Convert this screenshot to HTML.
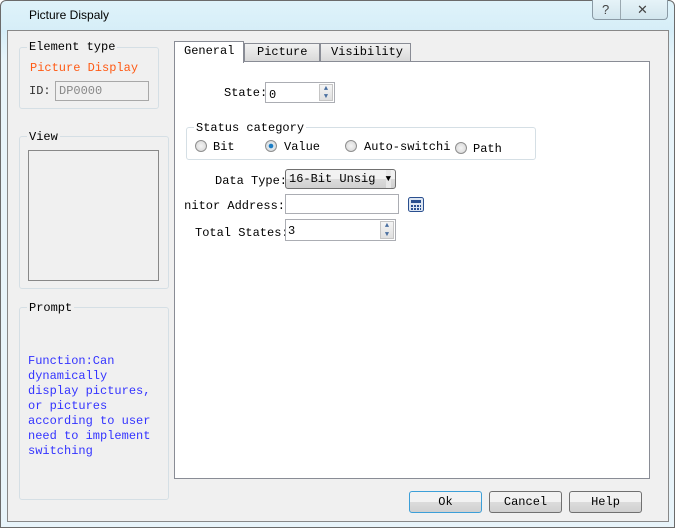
<!DOCTYPE html>
<html><head><style>
*{margin:0;padding:0;box-sizing:border-box}
body{width:675px;height:528px;background:#fff;position:relative;overflow:hidden;font-family:"Liberation Mono",monospace;font-size:12px;color:#000}
.a{position:absolute}
.frame{left:0;top:0;width:675px;height:528px;border:1px solid #6b6b6b;border-radius:6px 6px 0 0;background:linear-gradient(#dff3fa,#d6eef8 30px,#e8f4fa 60px,#e8f4fa)}
.client{left:7px;top:30px;width:662px;height:492px;background:#f0f0f0;border:1px solid #888}
.grp{border:1px solid #d5dfe5;border-radius:3px}
.lab{background:#f0f0f0;padding:0 2px;white-space:nowrap}
.inp{background:#fff;border:1px solid #abadb3}
.spin{position:absolute;right:1px;top:1px;width:14px;bottom:1px;border:1px solid #c5c5c5;background:linear-gradient(#f5f5f5,#e0e0e0);font-size:7px;color:#4a6fa0;text-align:center;line-height:8px}
.btn{border:1px solid #707070;border-radius:3px;background:linear-gradient(#f2f2f2 50%,#dcdcdc 50%,#d0d0d0);text-align:center;line-height:19px}
.radio{width:12px;height:12px;border-radius:50%;border:1px solid #8f8f8f;background:radial-gradient(#f4f4f4,#d4d4d4)}
.t{white-space:nowrap}
</style></head><body>
<div class="a frame"></div>
<div class="a t" style="left:29px;top:8px;font-family:'Liberation Sans',sans-serif;font-size:12px">Picture Dispaly</div>
<div class="a" style="left:592px;top:0;width:76px;height:20px;border:1px solid #8a9aa5;border-top:none;border-radius:0 0 4px 4px;background:linear-gradient(#e6f3f8,#d2e6ee)"></div>
<div class="a" style="left:620px;top:0;width:1px;height:19px;background:#9aa8b0"></div>
<div class="a t" style="left:602px;top:2px;font-family:'Liberation Sans',sans-serif;font-size:13px;color:#444">?</div>
<div class="a t" style="left:637px;top:2px;font-family:'Liberation Sans',sans-serif;font-size:13px;color:#444">✕</div>
<div class="a client"></div>
<div class="a grp" style="left:19px;top:47px;width:140px;height:62px"></div>
<div class="a lab t" style="left:27px;top:40px">Element type</div>
<div class="a t" style="left:30px;top:61px;color:#ff5a14">Picture Display</div>
<div class="a t" style="left:29px;top:84px;color:#333">ID:</div>
<div class="a" style="left:55px;top:81px;width:94px;height:20px;border:1px solid #a8a8a8;background:#f0f0f0;color:#888;padding:2px 3px">DP0000</div>
<div class="a grp" style="left:19px;top:136px;width:150px;height:153px"></div>
<div class="a lab t" style="left:27px;top:130px">View</div>
<div class="a" style="left:28px;top:150px;width:131px;height:131px;border:1px solid #888"></div>
<div class="a grp" style="left:19px;top:307px;width:150px;height:193px"></div>
<div class="a lab t" style="left:27px;top:301px">Prompt</div>
<div class="a" style="left:28px;top:354px;color:#3333ff;line-height:15px;white-space:pre">Function:Can
dynamically
display pictures,
or pictures
according to user
need to implement
switching</div>
<div class="a" style="left:174px;top:61px;width:476px;height:418px;background:#fff;border:1px solid #898c95"></div>
<div class="a" style="left:244px;top:43px;width:76px;height:19px;border:1px solid #898c95;background:linear-gradient(#f2f2f2,#d9d9d9)"></div>
<div class="a t" style="left:257px;top:45px">Picture</div>
<div class="a" style="left:320px;top:43px;width:91px;height:19px;border:1px solid #898c95;background:linear-gradient(#f2f2f2,#d9d9d9)"></div>
<div class="a t" style="left:331px;top:45px">Visibility</div>
<div class="a" style="left:174px;top:41px;width:70px;height:22px;border:1px solid #898c95;border-bottom:none;background:#fff"></div>
<div class="a t" style="left:184px;top:44px">General</div>
<div class="a t" style="left:224px;top:86px">State:</div>
<div class="a inp" style="left:265px;top:82px;width:70px;height:21px"><span class="a" style="left:3px;top:5px">0</span><div class="spin">▲<br>▼</div></div>
<div class="a grp" style="left:186px;top:127px;width:350px;height:33px;background:#fff"></div>
<div class="a t" style="left:194px;top:121px;background:#fff;padding:0 2px">Status category</div>
<div class="a radio" style="left:195px;top:140px"></div><div class="a t" style="left:213px;top:140px">Bit</div>
<div class="a radio" style="left:265px;top:140px;background:radial-gradient(#1a7cc4 30%,#dfe8ee 35%,#d4d4d4)"></div><div class="a t" style="left:284px;top:140px">Value</div>
<div class="a radio" style="left:345px;top:140px"></div><div class="a t" style="left:364px;top:140px">Auto-switchi</div>
<div class="a radio" style="left:455px;top:142px"></div><div class="a t" style="left:473px;top:142px">Path</div>
<div class="a t" style="left:215px;top:174px">Data Type:</div>
<div class="a btn" style="left:285px;top:169px;width:111px;height:20px;text-align:left;padding-left:3px;line-height:18px;overflow:hidden;white-space:nowrap">16-Bit Unsig<span class="a" style="right:4px;top:0;background:#e8e8e8;font-size:9px">▼</span></div>
<div class="a" style="left:185px;top:199px;width:100px;height:16px;overflow:hidden"><span class="a t" style="right:0;top:0">Monitor Address:</span></div>
<div class="a inp" style="left:285px;top:194px;width:114px;height:20px"></div>
<svg class="a" style="left:408px;top:197px" width="16" height="15"><rect x="0.5" y="0.5" width="15" height="14" rx="2" fill="#dde6f2" stroke="#2a4f8f"/><rect x="3" y="3" width="10" height="3" fill="#2a4f8f"/><g fill="#2a4f8f"><rect x="3" y="8" width="2" height="2"/><rect x="6" y="8" width="2" height="2"/><rect x="9" y="8" width="2" height="2"/><rect x="12" y="8" width="1" height="2"/><rect x="3" y="11" width="2" height="2"/><rect x="6" y="11" width="2" height="2"/><rect x="9" y="11" width="2" height="2"/><rect x="12" y="11" width="1" height="2"/></g></svg>
<div class="a t" style="left:195px;top:226px">Total States:</div>
<div class="a inp" style="left:285px;top:219px;width:111px;height:22px"><span class="a" style="left:2px;top:4px">3</span><div class="spin" style="line-height:9px">▲<br>▼</div></div>
<div class="a btn" style="left:409px;top:491px;width:73px;height:22px;border-color:#3c9fd8;line-height:20px">Ok</div>
<div class="a btn" style="left:489px;top:491px;width:73px;height:22px;line-height:20px">Cancel</div>
<div class="a btn" style="left:569px;top:491px;width:73px;height:22px;line-height:20px">Help</div>
</body></html>
